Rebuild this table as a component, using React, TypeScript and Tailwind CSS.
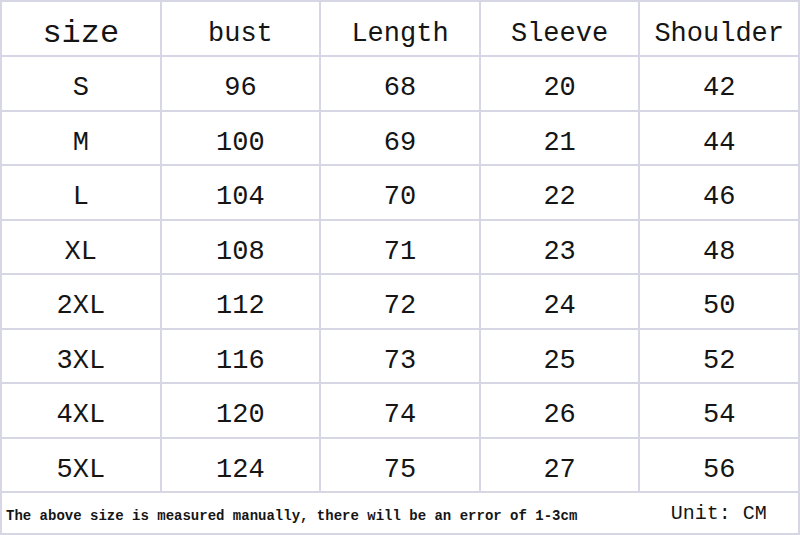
const headers = ['size', 'bust', 'Length', 'Sleeve', 'Shoulder'];

const rows: [string, number, number, number, number][] = [
  ['S', 96, 68, 20, 42],
  ['M', 100, 69, 21, 44],
  ['L', 104, 70, 22, 46],
  ['XL', 108, 71, 23, 48],
  ['2XL', 112, 72, 24, 50],
  ['3XL', 116, 73, 25, 52],
  ['4XL', 120, 74, 26, 54],
  ['5XL', 124, 75, 27, 56],
];

export default function App() {
  return (
    <div className="w-[800px] h-[535px] bg-white overflow-hidden text-[#151515] font-['Liberation_Mono','DejaVu_Sans_Mono',monospace]">
      <table className="w-[800px] table-fixed border-collapse">
        <thead>
          <tr className="h-[55px]">
            {headers.map((h, i) => (
              <th
                key={h}
                className={`border-2 border-[#d6d6e4] font-normal text-center align-middle leading-[32px] pt-[10px] ${
                  i === 0 ? 'text-[32px]' : 'text-[27px]'
                }`}
              >
                {h}
              </th>
            ))}
          </tr>
        </thead>
        <tbody>
          {rows.map(r => (
            <tr key={r[0]} className="h-[54.5px]">
              {r.map((v, i) => (
                <td
                  key={i}
                  className="border-2 border-[#d6d6e4] text-[27px] leading-[30px] text-center align-middle pt-[10px]"
                >
                  {v}
                </td>
              ))}
            </tr>
          ))}
          <tr className="h-[42px]">
            <td
              colSpan={4}
              className="border-2 border-r-0 border-[#d6d6e4] pl-[4px] pt-[6px] text-[14px] leading-[18px] font-bold whitespace-nowrap align-middle"
            >
              The above size is measured manually, there will be an error of 1-3cm
            </td>
            <td className="border-2 border-l-0 border-[#d6d6e4] text-[20px] leading-[22px] text-center align-middle pt-[2px]">
              Unit: CM
            </td>
          </tr>
        </tbody>
      </table>
    </div>
  );
}
